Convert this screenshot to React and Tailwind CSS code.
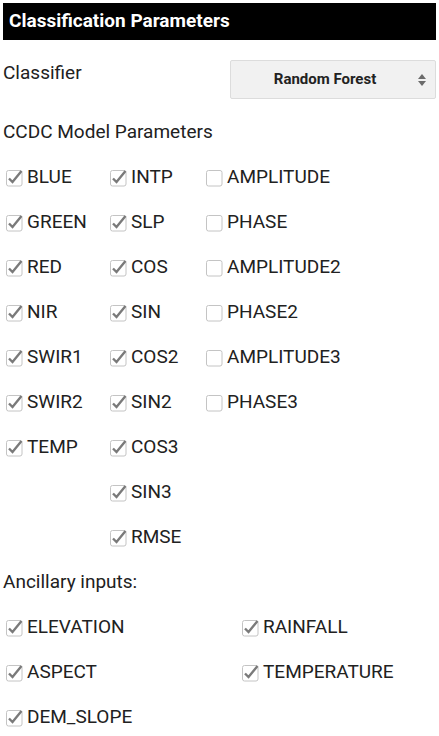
const CCDC = [
  ['BLUE', 'INTP', 'AMPLITUDE'],
  ['GREEN', 'SLP', 'PHASE'],
  ['RED', 'COS', 'AMPLITUDE2'],
  ['NIR', 'SIN', 'PHASE2'],
  ['SWIR1', 'COS2', 'AMPLITUDE3'],
  ['SWIR2', 'SIN2', 'PHASE3'],
  ['TEMP', 'COS3', null],
  [null, 'SIN3', null],
  [null, 'RMSE', null],
];

const ANCILLARY = [
  ['ELEVATION', 'RAINFALL'],
  ['ASPECT', 'TEMPERATURE'],
  ['DEM_SLOPE', null],
];

function Box({ checked }) {
  return (
    <svg width="18" height="18" viewBox="0 0 18 18" className="shrink-0">
      <rect x="1.5" y="1.5" width="15.5" height="15.5" rx="2" fill="#ffffff" stroke="#c4c4c4" />
      {checked && (
        <path d="M4 9.5 L7.5 13 L16.5 2" fill="none" stroke="#7a7a7a" strokeWidth="2.4" strokeLinejoin="miter" />
      )}
    </svg>
  );
}

function Check({ label, checked = true }) {
  if (!label) return <div />;
  return (
    <div className="flex items-center gap-[4px]">
      <Box checked={checked} />
      <span>{label}</span>
    </div>
  );
}

export default function App() {
  return (
    <div className="w-[439px] h-[736px] bg-white text-[#212121] text-[19px] px-[3px] pt-[3px] overflow-hidden" style={{ fontFamily: 'Roboto, "Liberation Sans", sans-serif' }}>
      {/* Header */}
      <div className="bg-black text-white font-bold text-[19px] h-[37px] flex items-center px-[6px]">
        Classification Parameters
      </div>

      {/* Classifier */}
      <div className="flex justify-between mt-[20px] mb-[11px]">
        <div className="leading-[24px] pt-[1px]">Classifier</div>
        <div className="w-[206px] h-[39px] bg-[#f1f1f1] border border-[#dcdcdc] rounded-[2px] flex items-center relative pr-[16px]">
          <span className="flex-1 text-center font-bold text-[15px] text-[#222]">Random Forest</span>
          <svg width="10" height="16" viewBox="0 0 10 16" className="absolute right-[8px] top-[11px]">
            <path d="M1 7 L5 2 L9 7 Z" fill="#6b6b6b" />
            <path d="M1 9 L5 14 L9 9 Z" fill="#6b6b6b" />
          </svg>
        </div>
      </div>

      <div className="h-[45px] flex items-center">CCDC Model Parameters</div>

      <div className="pl-[2px]">
        {CCDC.map((row, i) => (
          <div key={i} className="grid grid-cols-[104px_96px_1fr] h-[45px] items-center">
            <Check label={row[0]} />
            <Check label={row[1]} />
            <Check label={row[2]} checked={false} />
          </div>
        ))}
      </div>

      <div className="h-[45px] flex items-center">Ancillary inputs:</div>

      <div className="pl-[2px]">
        {ANCILLARY.map((row, i) => (
          <div key={i} className="grid grid-cols-[236px_1fr] h-[45px] items-center">
            <Check label={row[0]} />
            <Check label={row[1]} />
          </div>
        ))}
      </div>
    </div>
  );
}
